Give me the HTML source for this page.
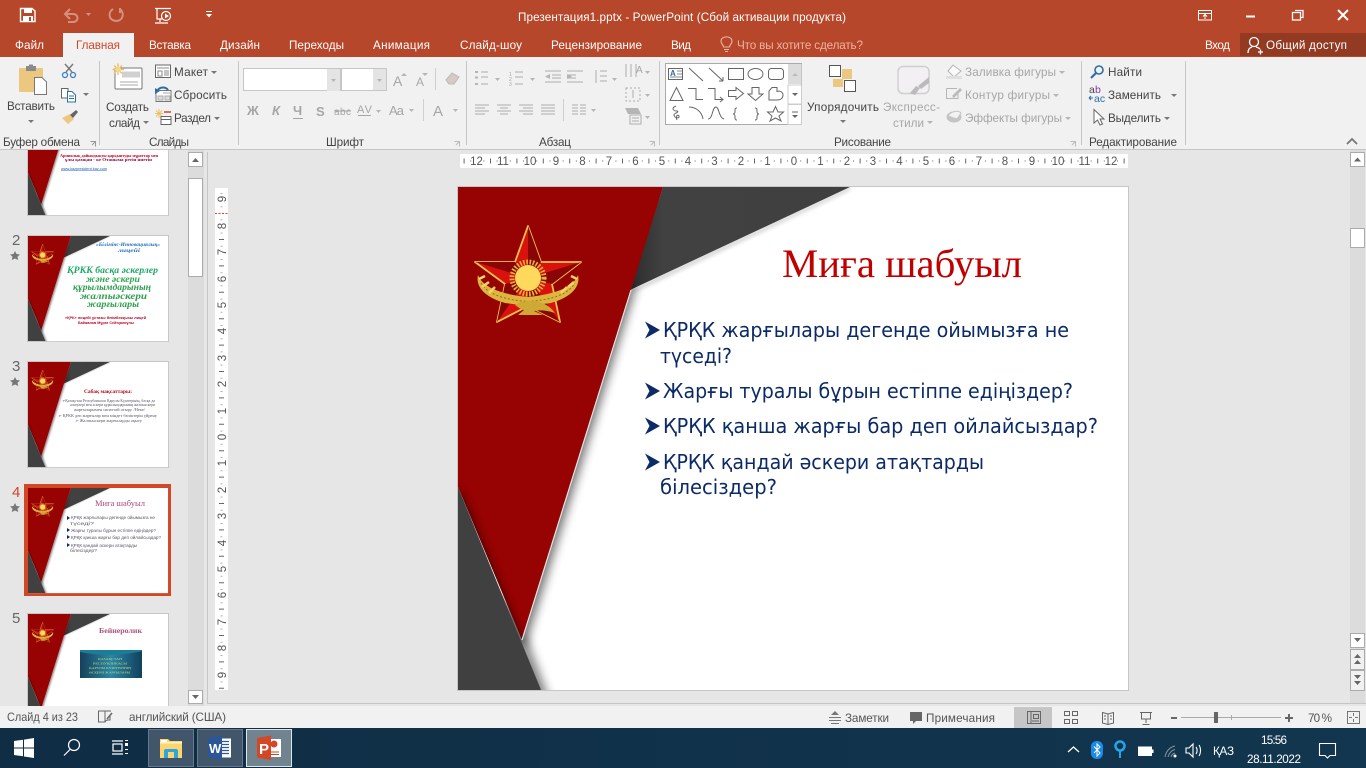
<!DOCTYPE html>
<html lang="ru"><head><meta charset="utf-8"><title>PowerPoint</title>
<style>
html,body{margin:0;padding:0;width:1366px;height:768px;overflow:hidden;background:#e6e6e6}
svg{display:block}
text{font-family:"Liberation Sans","DejaVu Sans",sans-serif;font-size:11.7px;fill:#444}
.w text,text.w{fill:#fff}
.g text,text.g{fill:#a6a6a6}
.l{fill:none;stroke:#adadad;stroke-width:1;shape-rendering:crispEdges}
.d{fill:none;stroke:#666;stroke-width:1}
.r text{font-size:11.5px;fill:#555;text-anchor:middle}
.c{fill:#777}
.cg{fill:#b5b5b5}
.s{font-family:"DejaVu Sans",sans-serif;font-size:20.5px;fill:#0b2a66}
.tn{font-size:4.2px;fill:#556}
</style></head><body>
<svg xmlns="http://www.w3.org/2000/svg" width="1366" height="768" viewBox="0 0 1366 768" shape-rendering="geometricPrecision">
<defs>
<filter id="b5" x="-40%" y="-40%" width="180%" height="180%"><feGaussianBlur stdDeviation="5"/></filter>
<filter id="b3" x="-30%" y="-30%" width="160%" height="160%"><feGaussianBlur stdDeviation="2"/></filter>
<clipPath id="sc"><rect width="670" height="503"/></clipPath>
<clipPath id="red"><polygon points="0,0 205,0 64,453 0,300"/></clipPath>
<clipPath id="tc"><rect x="0" y="150" width="187" height="556"/></clipPath>
<linearGradient id="gt" x1="0" x2="1" y1="0" y2="0"><stop offset="0" stop-color="#2c2c2c"/><stop offset=".15" stop-color="#414141"/><stop offset="1" stop-color="#404040"/></linearGradient>
<linearGradient id="tb" x1="0" x2="1" y1="0" y2="0"><stop offset="0" stop-color="#0f2d45"/><stop offset="1" stop-color="#12364f"/></linearGradient>
<linearGradient id="pic" x1="0" x2="1" y1="0" y2="0"><stop offset="0" stop-color="#15405a"/><stop offset=".5" stop-color="#2a86a8"/><stop offset="1" stop-color="#12405c"/></linearGradient>
<g id="emblem">
 <polygon points="70,39 83,75 123,75 94,97 102,135 70,119 39,135 47,97 17,75 57,75" fill="#d9120e" stroke="#eec350" stroke-width="1.800" stroke-linejoin="round"/>
 <polygon points="70,39 83,75 70,91" fill="#8a0606"/><polygon points="123,75 94,97 70,91" fill="#8a0606"/><polygon points="102,135 70,119 70,91" fill="#8a0606"/><polygon points="39,135 47,97 70,91" fill="#8a0606"/><polygon points="17,75 57,75 70,91" fill="#8a0606"/>
 <circle cx="70" cy="91" r="16" fill="none" stroke="#e4b43c" stroke-width="5" stroke-dasharray="1.600 1.600"/>
 <circle cx="70" cy="91" r="13" fill="#ffd95c"/>
 <path d="M20 88C17 101 29 111 47 116L70 119L93 116C111 111 123 101 120 88C116 99 100 107 70 110C40 107 24 99 20 88Z" fill="#dcb63f"/>
 <path d="M23 96C30 108 48 113 70 114.500C92 113 110 108 117 96" fill="none" stroke="#8f6f1c" stroke-width="1" stroke-dasharray="2 2"/>
 <path d="M21 92L27 89M24 100L31 95M31 106L37 100M110 100L116 95M103 106L109 100M113 89L119 92" stroke="#f3d465" stroke-width="2.500"/>
 <path d="M57 118C62 113 78 113 84 116C90 118 94 122 97 126C88 123 82 123 76 124L85 128H60L66 123C62 122 60 120 57 118Z" fill="#cfa935"/>
</g>
<g id="bg">
 <rect width="670" height="503" fill="#fff"/>
 <g clip-path="url(#sc)">
  <polygon points="392,0 172,103 174,106 392,3" fill="#000" opacity=".22" filter="url(#b3)"/>
  <polygon points="205,0 392,0 172,103" fill="url(#gt)"/>
  <polygon points="100,100 178,100 67,460 40,460" fill="#000" opacity=".55" filter="url(#b5)"/>
  <polygon points="60,450 68,450 91,512 70,512" fill="#000" opacity=".5" filter="url(#b5)"/>
  <polygon points="0,0 205,0 64,453 0,300" fill="#970202"/>
  <g clip-path="url(#red)"><polygon points="0,300 83,503 0,503" fill="#000" opacity=".75" filter="url(#b5)"/></g>
  <path d="M173 103L64 453" stroke="#e5e5e5" stroke-width="1.200" fill="none"/>
  <polygon points="0,300 83,503 0,503" fill="#404040"/>
 </g>
 <use href="#emblem"/>
</g>
</defs>

<!-- chrome base -->
<rect width="1366" height="768" fill="#e6e6e6"/>
<rect width="1366" height="57" fill="#b7472a"/>
<rect y="57" width="1366" height="92" fill="#f1f1f1"/>
<rect y="149" width="1366" height="1" fill="#c6c6c6"/>
<rect x="63" y="33" width="71" height="25" fill="#f1f1f1"/>
<rect x="1240" y="33" width="126" height="23" fill="#923a22"/>

<!-- QAT -->
<g fill="none" stroke="#fff">
 <path d="M20.500 8.500H32L35 11V21.500H20.500Z" stroke-width="1.400"/><rect x="24" y="8" width="8" height="5" fill="#fff" stroke="none"/><rect x="23" y="16" width="10" height="6" fill="#fff" stroke="none"/><rect x="29" y="17" width="2" height="4" fill="#b7472a" stroke="none"/>
</g>
<g fill="none" stroke="#d3917e" stroke-width="2">
 <path d="M66 14H73C79 14 79 22 73 22H68"/><path d="M70 9L65 14L70 19"/>
 <path d="M113 9C108 12 108 20 116 21C123 21 125 13 120 9"/><path d="M120 8V13"/>
</g>
<polygon points="86,13 91,13 88.500,16" fill="#d3917e"/>
<g fill="none" stroke="#fff" stroke-width="1.200">
 <path d="M155 8.500H171M157 9V19H162M160 19V22M155 23H168"/>
 <circle cx="166" cy="16" r="4.500"/>
</g>
<polygon points="165,13.500 169,16 165,18.500" fill="#fff"/>
<path d="M206 11.500h6" stroke="#fff"/><polygon points="206,14 212,14 209,17.500" fill="#fff"/>

<text class="w" x="518" y="21" textLength="328">Презентация1.pptx - PowerPoint (Сбой активации продукта)</text>

<!-- window buttons -->
<g fill="none" stroke="#fff">
 <rect x="1198.500" y="10.500" width="13" height="9.500"/><path d="M1198 13.500h14"/><path d="M1205 19v-4M1203 16.500l2-2 2 2"/>
 <path d="M1246 16.500h9" stroke-width="2"/>
 <rect x="1292.500" y="12.500" width="8" height="7.500" stroke-width="1.300"/><path d="M1295 10.500h8v7h-2" stroke-width="1.300"/>
 <path d="M1338 10L1348 20M1348 10L1338 20" stroke-width="2"/>
</g>

<!-- tabs -->
<g class="w">
 <text x="15" y="49" textLength="29">Файл</text>
 <text x="149" y="49" textLength="42">Вставка</text>
 <text x="220" y="49" textLength="40">Дизайн</text>
 <text x="289" y="49" textLength="55">Переходы</text>
 <text x="373" y="49" textLength="57">Анимация</text>
 <text x="460" y="49" textLength="62">Слайд-шоу</text>
 <text x="551" y="49" textLength="91">Рецензирование</text>
 <text x="671" y="49" textLength="20">Вид</text>
 <text x="1205" y="49" textLength="25">Вход</text>
 <text x="1266" y="49" textLength="81">Общий доступ</text>
</g>
<text x="76" y="49" textLength="44" style="fill:#d24726">Главная</text>
<text x="737" y="49" textLength="126" style="fill:#eeb3a1">Что вы хотите сделать?</text>
<g fill="none" stroke="#eeb3a1" stroke-width="1.100"><path d="M723.500 47C723 44 721 44 721 41C721 35.500 732 35.500 732 41C732 44 730 44 729.500 47Z"/><path d="M724 49.500h5M725 51.500h3"/></g>
<g fill="none" stroke="#fff" stroke-width="1.300"><circle cx="1254" cy="42" r="4.500"/><path d="M1248 53C1248 49 1250 47.500 1252 47M1256 47C1258 47.500 1259 48 1260 49"/><path d="M1258 52h5M1260.500 49.500v5"/></g>

<!-- separators -->
<g stroke="#c6c6c6"><path d="M99.500 61V145M238.500 61V145M466.500 61V145M659.500 61V145M1081.500 61V145M1185.500 61V145"/></g>

<!-- clipboard group -->
<rect x="19" y="68" width="24" height="24" rx="1" fill="#ecc77f"/><rect x="26" y="66" width="10" height="5" fill="#8a8a8a"/><rect x="29" y="64.500" width="4" height="3" fill="#8a8a8a"/>
<path d="M34.500 77.500H42L46.500 82V94.500H34.500Z" fill="#fff" stroke="#777"/>
<text x="7" y="110" textLength="48">Вставить</text><polygon points="28,120 34,120 31,123" class="c"/>
<g fill="none" stroke="#777" stroke-width="1.400"><path d="M65 64L72 72M73 64L66 72"/></g><g fill="none" stroke="#3f7fbf" stroke-width="1.300"><circle cx="65" cy="75" r="2.500"/><circle cx="73" cy="75" r="2.500"/></g>
<path d="M61.500 88.500H68V98H61.500Z" fill="#fff" stroke="#666"/><path d="M67.500 91.500H72L75.500 95V102H67.500Z" fill="#fff" stroke="#2f6ea5"/><path d="M69 96h5M69 98.500h5" stroke="#2f6ea5"/>
<polygon points="83,93 89,93 86,96" class="c"/>
<path d="M62 118L70 114L74 119L68 124Z" fill="#ecc77f"/><path d="M70 115L76 110L78 112L73 118Z" fill="#666"/>
<text x="3" y="146" textLength="77">Буфер обмена</text>
<path d="M90.500 141.500h5v5M92 145l3-3" stroke="#999" fill="none"/>

<!-- slides group -->
<rect x="115" y="68" width="27" height="21" rx="1" fill="#fff" stroke="#777"/><rect x="122" y="71.500" width="18" height="6" fill="#d0d0d0"/><path d="M120 82h18M120 85h18" stroke="#aaa"/>
<g stroke="#ecc066" stroke-width="1.400"><path d="M118 63.500V75M112.500 69.500H124M114 65.500L122 73.500M122 65.500L114 73.500"/></g><circle cx="118" cy="69.500" r="3" fill="#f5d590"/>
<text x="106" y="111" textLength="43">Создать</text><text x="109" y="127" textLength="31">слайд</text><polygon points="143,121 149,121 146,124" class="c"/>
<rect x="155.500" y="65" width="15" height="12.500" fill="#fff" stroke="#666"/><path d="M157 68h12M158 71h4v5h-4zM164 71h5M164 73h5M164 75h5" stroke="#888" fill="none"/>
<path d="M156 90.500h15v11h-15z" fill="#fff" stroke="#777"/><path d="M163 93h7M158 96h5v4h-5zM165 96h5v4h-5z" stroke="#aaa" fill="#ddd"/><path d="M157 91C160 86 166 87 168 90" stroke="#2f6ea5" stroke-width="2" fill="none"/><polygon points="155,88 160,91 155,94" fill="#2f6ea5"/>
<g stroke="#ecc066"><path d="M159 109V118M155 113.500H163M156 110.500L162 116.500M162 110.500L156 116.500"/></g><path d="M164 112h7" stroke="#d24726" stroke-width="1.500"/><path d="M161 116.500h10v8h-10z" fill="#fff" stroke="#666"/><path d="M161 119.500h10" stroke="#666"/>
<text x="174" y="76" textLength="34">Макет</text><polygon points="211,71 217,71 214,74" class="c"/>
<text x="174" y="99" textLength="53">Сбросить</text>
<text x="174" y="122" textLength="37">Раздел</text><polygon points="214,117 220,117 217,120" class="c"/>
<text x="149" y="146" textLength="40">Слайды</text>

<!-- font group -->
<rect x="243.500" y="68.500" width="143" height="22" fill="#fff" stroke="#c6c6c6"/>
<rect x="327" y="69" width="13" height="22" fill="#e4e4e4"/><rect x="340" y="68" width="2" height="23" fill="#c6c6c6"/><rect x="373" y="69" width="13" height="21" fill="#e4e4e4"/>
<polygon points="331,79 336,79 333.500,82" class="cg"/><polygon points="377,79 382,79 379.500,82" class="cg"/>
<g class="g" style="font-weight:bold">
 <text x="393" y="86" style="font-size:14px;font-weight:normal">A</text><text x="416" y="86" style="font-size:12px;font-weight:normal">A</text>
 <text x="247" y="115" style="font-size:13px">Ж</text><text x="272" y="115" style="font-size:13px;font-style:italic">К</text><text x="293" y="115" style="font-size:13px">Ч</text><text x="316" y="116" style="font-size:13px">S</text>
 <text x="334" y="115" textLength="17" style="font-size:10px;font-weight:normal">abc</text><text x="357" y="113" textLength="15" style="font-size:11px;font-weight:normal">AV</text>
 <text x="389" y="115" textLength="15" style="font-size:13px;font-weight:normal">Aa</text><text x="433" y="116" style="font-size:15px;font-weight:normal">A</text>
</g>
<path d="M293 118.500h10M334 111h17M358 115.500h13" stroke="#a6a6a6" fill="none"/>
<polygon points="401,76 407,76 404,73" class="cg"/><polygon points="422,73 428,73 425,76" class="cg"/>
<polygon points="376,110 381,110 378.500,113" class="cg"/><polygon points="409,109 414,109 411.500,112" class="cg"/><polygon points="453,109 458,109 455.500,112" class="cg"/>
<path d="M435.500 68V90M423.500 99V121" stroke="#d0d0d0"/>
<path d="M446 80L452 73L459 77L454 84H449Z" fill="#d8c8c8" stroke="#bbb"/>
<text x="326" y="146" textLength="38">Шрифт</text>
<path d="M454.500 141.500h5v5M456 145l3-3" stroke="#bbb" fill="none"/>

<!-- paragraph group -->
<g class="l">
 <path d="M481 72h7M481 77h7M481 84h7M515 72h8M515 77h8M515 84h8"/>
 <path d="M545 71h16M552 75h9M552 78h9M545 82h16M567 71h16M567 75h9M567 78h9M567 82h16"/>
 <path d="M600 71h7M600 76h7M600 81h7M596 70v13"/>
 <path d="M626 64v13M631 64v13M636 64v13"/>
 <rect x="626" y="88" width="14" height="13" stroke-dasharray="2 2"/><path d="M633 90v8"/>
 <rect x="630" y="115" width="11" height="9"/><path d="M632 118h7M632 121h7"/>
 <path d="M475 105h14M475 108h10M475 111h14M475 114h10"/>
 <path d="M497 105h14M500 108h8M497 111h14M500 114h8"/>
 <path d="M519 105h14M523 108h10M519 111h14M523 114h10"/>
 <path d="M541 105h14M541 108h14M541 111h14M541 114h14"/>
 <path d="M572 105h6M572 108h6M572 111h6M572 114h6M580 105h6M580 108h6M580 111h6M580 114h6"/>
</g>
<rect x="475" y="71" width="3" height="2" class="cg"/><rect x="475" y="76.500" width="3" height="2" class="cg"/><rect x="475" y="83" width="3" height="2" class="cg"/>
<polygon points="550,74 545,76.500 550,79" class="cg"/><polygon points="567,74 572,76.500 567,79" class="cg"/>
<polygon points="625,108 638,108 641,114 628,114" class="cg"/>
<text class="g" x="636" y="73" style="font-size:10px">A</text>
<text class="g" x="509" y="76" style="font-size:5px">1</text><text class="g" x="509" y="81" style="font-size:5px">2</text><text class="g" x="509" y="86" style="font-size:5px">3</text>
<path d="M563.500 99V121" stroke="#d0d0d0"/>
<g class="cg"><polygon points="495,78 500,78 497.500,81"/><polygon points="530,78 535,78 532.500,81"/><polygon points="612,78 617,78 614.500,81"/><polygon points="645,71 650,71 647.500,74"/><polygon points="645,94 650,94 647.500,97"/><polygon points="645,116 650,116 647.500,119"/><polygon points="591,109 596,109 593.500,112"/></g>
<text x="539" y="146" textLength="32">Абзац</text>
<path d="M649.500 141.500h5v5M651 145l3-3" stroke="#bbb" fill="none"/>

<!-- shapes gallery -->
<rect x="665.500" y="63.500" width="136" height="61" fill="#fff" stroke="#ababab"/>
<rect x="788" y="64" width="13.500" height="20" fill="#dcdcdc"/><rect x="788" y="85" width="13.500" height="19" fill="#fff" stroke="#ccc"/><rect x="788" y="104.500" width="13.500" height="20" fill="#fff" stroke="#ccc"/>
<polygon points="792,76 798,76 795,73" fill="#bbb"/><polygon points="792,93 798,93 795,96" fill="#666"/><path d="M792 112h6" stroke="#666"/><polygon points="792,115 798,115 795,118" fill="#666"/>
<g fill="#fff" stroke="#666">
 <rect x="668.500" y="68.500" width="14" height="11"/>
 <path d="M689 68L703 81M709 68L723 81M723 81v-4M723 81h-4" fill="none"/>
 <rect x="728.500" y="68.500" width="15" height="11"/><ellipse cx="755.500" cy="74" rx="7.500" ry="5.500"/><rect x="768.500" y="68.500" width="15" height="11" rx="3"/>
 <polygon points="676.500,87.500 683,100.500 670,100.500"/>
 <path d="M688 88.500H696V99.500H703M708 88.500H715V99.500H723M720 97l3 2.500-3 2.500" fill="none"/>
 <polygon points="728.500,90.500 736,90.500 736,87.500 743.500,93.500 736,99.500 736,96.500 728.500,96.500"/>
 <polygon points="752,87.500 759,87.500 759,94 763,94 755.500,100.500 748,94 752,94"/>
 <path d="M772 87.500H777V91.500C780 90.500 783 92 783 95C783 98 781 100 777 100H769V91Z"/>
 <path d="M676 106C671 108 673 111 677 111C680 112 674 113 674 115C674 118 680 119 679 116C678 114 675 116 677 120" fill="none"/>
 <path d="M689 107C696 107 702 112 703 119M708 119C713 119 712 107 716 107C719 107 719 118 724 119" fill="none"/>
 <path d="M737 108C735 108 735 109 735 111V112C735 113 734 114 733 114C734 114 735 115 735 116V118C735 119 735 120 737 120M755 108C757 108 757 109 757 111V112C757 113 758 114 759 114C758 114 757 115 757 116V118C757 119 757 120 755 120" fill="none"/>
 <polygon points="775.500,106.500 778,112 783.500,112 779,116 781,121 775.500,118 770,121 772,116 767.500,112 773,112"/>
</g>
<text x="670" y="76" style="font-size:8px;font-weight:bold;fill:#2f6ea5">A</text><path d="M677 71h5M677 74h5M670 77h12" stroke="#888"/>

<!-- drawing group -->
<rect x="829.500" y="65.500" width="11" height="11" fill="#fff" stroke="#555"/>
<rect x="842" y="69" width="10" height="10" fill="#ecc77f"/><rect x="833" y="79" width="10" height="8" fill="#ecc77f"/>
<rect x="844.500" y="80.500" width="11" height="11" fill="#fff" stroke="#555"/>
<text x="807" y="111" textLength="72">Упорядочить</text><polygon points="840,120 846,120 843,123" class="c"/>
<rect x="898" y="66.500" width="31" height="27" rx="5" fill="#f3f0f3" stroke="#cfcfcf" stroke-width="1.500"/>
<path d="M910 93L916 86L920 88L915 95Z" fill="#bbb"/><path d="M918 86L929 77V83L921 89Z" fill="#bbb"/>
<g class="g"><text x="883" y="111" textLength="57">Экспресс-</text><text x="893" y="127" textLength="31">стили</text>
<text x="965" y="76" textLength="91">Заливка фигуры</text><text x="965" y="99" textLength="85">Контур фигуры</text><text x="965" y="122" textLength="97">Эффекты фигуры</text></g>
<g class="cg"><polygon points="927,121 933,121 930,124"/><polygon points="1059,71 1065,71 1062,74"/><polygon points="1053,94 1059,94 1056,97"/><polygon points="1065,117 1071,117 1068,120"/></g>
<path d="M948 71L953 65L961 71L954 77Z" fill="#fafafa" stroke="#b5b5b5"/><rect x="946" y="76" width="16" height="3" fill="#e0e0e0"/>
<path d="M946.500 88.500H957M946.500 88.500V98.500H958V94" fill="none" stroke="#b5b5b5"/><path d="M952 96L960 88L962 90L954 98Z" fill="#bbb"/>
<ellipse cx="954" cy="117" rx="7.500" ry="5.500" fill="#c4c4c4"/><path d="M948 116C951 111 958 110 961 113L957 119Z" fill="#f2f2f2" stroke="#c4c4c4"/>
<text x="834" y="146" textLength="57">Рисование</text>
<path d="M1070.500 141.500h5v5M1072 145l3-3" stroke="#bbb" fill="none"/>

<!-- editing group -->
<circle cx="1099" cy="70" r="4" fill="none" stroke="#2f6ea5" stroke-width="1.600"/><path d="M1096 73L1091 78" stroke="#2f6ea5" stroke-width="2.200"/>
<text x="1108" y="76" textLength="34">Найти</text>
<text x="1089" y="93" style="font-size:10.500px;fill:#444">a</text><text x="1095" y="93" style="font-size:10.500px;fill:#7a3fa0">b</text><text x="1094" y="102" style="font-size:10.500px;fill:#2f6ea5">ac</text><path d="M1089 98h4M1089 98l2-2M1089 98l2 2" stroke="#2f6ea5" fill="none"/>
<text x="1108" y="99" textLength="53">Заменить</text><polygon points="1171,94 1177,94 1174,97" class="c"/>
<path d="M1094 109.500V123L1097.500 120L1100 125L1102.500 124L1100 119H1104Z" fill="#fff" stroke="#666"/>
<text x="1108" y="122" textLength="53">Выделить</text><polygon points="1164,117 1170,117 1167,120" class="c"/>
<text x="1089" y="146" textLength="88">Редактирование</text>
<path d="M1347 144L1352 139L1357 144" fill="none" stroke="#777" stroke-width="1.800"/>

<!-- main bg lines -->
<rect x="188" y="150" width="16" height="556" fill="#dcdcdc"/>
<rect x="207" y="152" width="1" height="551" fill="#c6c6c6"/>
<rect x="207" y="703" width="1159" height="1" fill="#c6c6c6"/>
<!-- thumbnail scrollbar -->
<rect x="188.500" y="152.500" width="14" height="14" fill="#fff" stroke="#ababab"/><polygon points="192,162 199,162 195.500,158" fill="#666"/>
<rect x="188.500" y="178.500" width="14" height="98" fill="#fff" stroke="#ababab"/>
<rect x="188.500" y="690.500" width="14" height="13" fill="#fff" stroke="#ababab"/><polygon points="192,695 199,695 195.500,699" fill="#666"/>
<!-- right scrollbar -->
<rect x="1350" y="150" width="15" height="553" fill="#dcdcdc"/>
<rect x="1350.500" y="152.500" width="14" height="14" fill="#fff" stroke="#ababab"/><polygon points="1354,161.500 1361,161.500 1357.500,157.500" fill="#666"/>
<rect x="1350.500" y="228.500" width="14" height="19" fill="#fff" stroke="#ababab"/>
<rect x="1350.500" y="633.500" width="14" height="14" fill="#fff" stroke="#ababab"/><polygon points="1354,638 1361,638 1357.500,642" fill="#666"/>
<rect x="1350.500" y="649.500" width="14" height="20" fill="#f1f1f1" stroke="#ababab"/><polygon points="1354,658 1361,658 1357.500,654" fill="#666"/><polygon points="1354,664 1361,664 1357.500,660" fill="#666"/>
<rect x="1350.500" y="670.500" width="14" height="20" fill="#f1f1f1" stroke="#ababab"/><polygon points="1354,675 1361,675 1357.500,679" fill="#666"/><polygon points="1354,681 1361,681 1357.500,685" fill="#666"/>

<!-- thumbnails -->
<g clip-path="url(#tc)">
 <rect x="27" y="109" width="142" height="107" fill="#c6c6c6"/><rect x="28" y="110" width="140" height="105" fill="#fff"/>
 <g transform="translate(28,110) scale(.209)"><use href="#bg"/></g>
 <text x="60" y="157" textLength="98" lengthAdjust="spacingAndGlyphs" style="font-size:4px;font-weight:bold;fill:#c00020;font-family:'Liberation Serif',serif">Армиялық дайындықты қарқынтуды мұраттар мен</text>
 <text x="65" y="161" textLength="87" lengthAdjust="spacingAndGlyphs" style="font-size:4px;font-weight:bold;fill:#a00030;font-family:'Liberation Serif',serif">ұлы қамқан - ке Отаныма ретін ниетін</text>
 <text x="61" y="170" textLength="46" lengthAdjust="spacingAndGlyphs" style="font-size:4px;fill:#2060c0">www.kazpresident.kaz.com</text>
 <path d="M61 170.500h46" stroke="#2f6ea5" stroke-width=".6"/>

 <rect x="27" y="235" width="142" height="107" fill="#c6c6c6"/><rect x="28" y="236" width="140" height="105" fill="#fff"/>
 <g transform="translate(28,236) scale(.209)"><use href="#bg"/></g>
 <text x="96" y="246" textLength="64" lengthAdjust="spacingAndGlyphs" style="font-size:5px;font-style:italic;font-weight:bold;fill:#1f6fc0;font-family:'Liberation Serif',serif">«Білімінс-Инновациялық»</text>
 <text x="118" y="252" textLength="22" lengthAdjust="spacingAndGlyphs" style="font-size:5px;font-style:italic;font-weight:bold;fill:#1f6fc0;font-family:'Liberation Serif',serif">лицейі</text>
 <g style="font-style:italic;font-weight:bold">
 <text x="67" y="273" textLength="91" lengthAdjust="spacingAndGlyphs" style="font-size:9px;fill:#20a868;font-family:'Liberation Serif',serif">ҚРКК басқа әскерлер</text>
 <text x="86" y="282" textLength="54" lengthAdjust="spacingAndGlyphs" style="font-size:9px;fill:#30a850;font-family:'Liberation Serif',serif">және әскери</text>
 <text x="73" y="290" textLength="78" lengthAdjust="spacingAndGlyphs" style="font-size:9px;fill:#30a050;font-family:'Liberation Serif',serif">құрылымдарының</text>
 <text x="80" y="299" textLength="67" lengthAdjust="spacingAndGlyphs" style="font-size:9px;fill:#30a050;font-family:'Liberation Serif',serif">жалпыәскери</text>
 <text x="87" y="307" textLength="52" lengthAdjust="spacingAndGlyphs" style="font-size:9px;fill:#30a050;font-family:'Liberation Serif',serif">жарғылары</text>
 </g>
 <text x="65" y="319" textLength="81" lengthAdjust="spacingAndGlyphs" style="font-size:3.500px;font-weight:bold;fill:#c00020">«ҚРК» лицейі ұстазы Әлімбекқызы лицей</text>
 <text x="78" y="324" textLength="56" lengthAdjust="spacingAndGlyphs" style="font-size:3.500px;font-weight:bold;fill:#c00020">Байжанов Мұрат Сейтқалиұлы</text>

 <rect x="27" y="361" width="142" height="107" fill="#c6c6c6"/><rect x="28" y="362" width="140" height="105" fill="#fff"/>
 <g transform="translate(28,362) scale(.209)"><use href="#bg"/></g>
 <text x="84" y="393" textLength="48" lengthAdjust="spacingAndGlyphs" style="font-size:5px;font-weight:bold;fill:#b80010;font-family:'Liberation Serif',serif">Сабақ мақсаттары:</text>
 <text class="tn" x="62" y="402" textLength="93" lengthAdjust="spacingAndGlyphs" style="font-size:3.800px;font-family:'Liberation Serif',serif">➢Қазақстан Республикасы Қарулы Күштерінің, басқа да</text>
 <text class="tn" x="70" y="406" textLength="85" lengthAdjust="spacingAndGlyphs" style="font-size:3.800px;font-family:'Liberation Serif',serif">әскерлері мен әскери құрылымдарының жалпыәскери</text>
 <text class="tn" x="74" y="411" textLength="71" lengthAdjust="spacingAndGlyphs" style="font-size:3.800px;font-family:'Liberation Serif',serif">жарғыларымен сипаттай отыру. /Неке/</text>
 <text class="tn" x="58" y="417" textLength="99" lengthAdjust="spacingAndGlyphs" style="font-size:3.800px;font-family:'Liberation Serif',serif">➢ ҚРКК деп жарғылар мен міндет бөліктерін үйрену</text>
 <text class="tn" x="75" y="422" textLength="67" lengthAdjust="spacingAndGlyphs" style="font-size:3.800px;font-family:'Liberation Serif',serif">➢ Жалпыәскери жарғыларды оқыту</text>

 <rect x="24" y="484" width="147" height="112" fill="#d24726"/><rect x="28" y="488" width="140" height="104" fill="#fff"/>
 <g transform="translate(28,488) scale(.209)"><use href="#bg"/></g>
 <text x="95" y="506" textLength="50" lengthAdjust="spacingAndGlyphs" style="font-size:8px;fill:#b0467c;font-family:'Liberation Serif',serif">Миға шабуыл</text>
 <polygon points="67,516 70,518 67,520" fill="#0b2a66"/><polygon points="67,528 70,530 67,532" fill="#0b2a66"/><polygon points="67,535 70,537 67,539" fill="#0b2a66"/><polygon points="67,543 70,545 67,547" fill="#0b2a66"/>
 <text class="tn" x="71" y="519" textLength="84" lengthAdjust="spacingAndGlyphs">ҚРҚК жарғылары дегенде ойымызға не</text>
 <text class="tn" x="70" y="525" textLength="24" lengthAdjust="spacingAndGlyphs">түседі?</text>
 <text class="tn" x="71" y="532" textLength="85" lengthAdjust="spacingAndGlyphs">Жарғы туралы бұрын естіппе едіңіздер?</text>
 <text class="tn" x="71" y="539" textLength="90" lengthAdjust="spacingAndGlyphs">ҚРҚК қанша жарғы бар деп ойлайсыздар?</text>
 <text class="tn" x="71" y="547" textLength="66" lengthAdjust="spacingAndGlyphs">ҚРҚК қандай әскери атақтарды</text>
 <text class="tn" x="70" y="552" textLength="27" lengthAdjust="spacingAndGlyphs">білесіздер?</text>

 <rect x="27" y="613" width="142" height="107" fill="#c6c6c6"/><rect x="28" y="614" width="140" height="105" fill="#fff"/>
 <g transform="translate(28,614) scale(.209)"><use href="#bg"/></g>
 <text x="99" y="633" textLength="43" lengthAdjust="spacingAndGlyphs" style="font-size:7.500px;font-weight:bold;fill:#b0507c;font-family:'Liberation Serif',serif">Бейнеролик</text>
 <rect x="80" y="650" width="62" height="28" fill="url(#pic)"/>
 <path d="M80 652C100 656 120 656 142 651V650H80Z" fill="#1e7d96"/>
 <text x="98" y="660" textLength="24" lengthAdjust="spacingAndGlyphs" style="font-size:3.500px;fill:#c8dc70;font-family:'Liberation Serif',serif">ҚАЗАҚСТАН</text>
 <text x="93" y="664.500" textLength="34" lengthAdjust="spacingAndGlyphs" style="font-size:3.500px;fill:#c8dc70;font-family:'Liberation Serif',serif">РЕСПУБЛИКАСЫ</text>
 <text x="89" y="669" textLength="42" lengthAdjust="spacingAndGlyphs" style="font-size:3.500px;fill:#c8dc70;font-family:'Liberation Serif',serif">ҚАРУЛЫ КҮШТЕРІНІҢ</text>
 <text x="89" y="673.500" textLength="41" lengthAdjust="spacingAndGlyphs" style="font-size:3.500px;fill:#c8dc70;font-family:'Liberation Serif',serif">ӘСКЕРИ ЖАРҒЫЛАРЫ</text>
</g>
<text x="12" y="245" style="font-size:15px;fill:#666">2</text><text x="12" y="371" style="font-size:15px;fill:#666">3</text>
<text x="12" y="497" style="font-size:15px;fill:#d24726">4</text><text x="12" y="623" style="font-size:15px;fill:#666">5</text>
<g fill="#777">
 <polygon id="st" points="15,251 16.500,254 20,254.500 17.500,256.800 18.200,260 15,258.500 11.800,260 12.500,256.800 10,254.500 13.500,254"/>
 <use href="#st" y="126"/><use href="#st" y="252"/>
</g>

<!-- rulers -->
<rect x="460" y="154" width="668" height="14" fill="#fff"/>
<path d="M463.600 161H1128" stroke="#666" stroke-width="5" stroke-dasharray="1 25.400"/>
<path d="M470.200 161H1128" stroke="#b0b0b0" stroke-width="2" stroke-dasharray="1 12.200"/>
<g class="r">
 <text x="476.500" y="165">12</text><text x="503" y="165">11</text><text x="530" y="165">10</text><text x="556" y="165">9</text><text x="582.500" y="165">8</text><text x="609" y="165">7</text><text x="635.500" y="165">6</text><text x="662" y="165">5</text><text x="688" y="165">4</text><text x="714.500" y="165">3</text><text x="741" y="165">2</text><text x="767.500" y="165">1</text><text x="794" y="165">0</text>
 <text x="820.500" y="165">1</text><text x="847" y="165">2</text><text x="873" y="165">3</text><text x="899.500" y="165">4</text><text x="926" y="165">5</text><text x="952" y="165">6</text><text x="979" y="165">7</text><text x="1005" y="165">8</text><text x="1032" y="165">9</text><text x="1058" y="165">10</text><text x="1084.500" y="165">11</text><text x="1111" y="165">12</text>
</g>
<rect x="215" y="188" width="13" height="502" fill="#fff"/>
<path d="M221.500 239V690" stroke="#666" stroke-width="5" stroke-dasharray="1 25.400"/>
<path d="M221.500 193V690" stroke="#b0b0b0" stroke-width="2" stroke-dasharray="1 12.200"/>
<path d="M215 213.500h13" stroke="#d24726" stroke-dasharray="2 1.500"/>
<g class="r">
 <text transform="translate(226,199) rotate(-90)">9</text><text transform="translate(226,226) rotate(-90)">8</text><text transform="translate(226,252) rotate(-90)">7</text><text transform="translate(226,279) rotate(-90)">6</text><text transform="translate(226,305) rotate(-90)">5</text><text transform="translate(226,331) rotate(-90)">4</text><text transform="translate(226,358) rotate(-90)">3</text><text transform="translate(226,384) rotate(-90)">2</text><text transform="translate(226,411) rotate(-90)">1</text><text transform="translate(226,437) rotate(-90)">0</text>
 <text transform="translate(226,463) rotate(-90)">1</text><text transform="translate(226,490) rotate(-90)">2</text><text transform="translate(226,516) rotate(-90)">3</text><text transform="translate(226,543) rotate(-90)">4</text><text transform="translate(226,569) rotate(-90)">5</text><text transform="translate(226,595) rotate(-90)">6</text><text transform="translate(226,622) rotate(-90)">7</text><text transform="translate(226,648) rotate(-90)">8</text><text transform="translate(226,675) rotate(-90)">9</text>
</g>

<!-- main slide -->
<rect x="457" y="186" width="672" height="505" fill="#c6c6c6"/>
<g transform="translate(458,187)"><use href="#bg"/></g>
<text x="782" y="277" textLength="240" lengthAdjust="spacingAndGlyphs" style="font-family:'Liberation Serif',serif;font-size:40px;fill:#c00000">Миға шабуыл</text>
<g fill="#0b2a66">
 <g id="bl"><path d="M645 321.500L660 330L645 338.500L649.500 330Z"/></g>
 <use href="#bl" y="61"/><use href="#bl" y="96"/><use href="#bl" y="132"/>
</g>
<text class="s" x="663" y="337" textLength="406" lengthAdjust="spacingAndGlyphs">ҚРҚК жарғылары дегенде ойымызға не</text>
<text class="s" x="660" y="363" textLength="72" lengthAdjust="spacingAndGlyphs">түседі?</text>
<text class="s" x="663" y="398" textLength="410" lengthAdjust="spacingAndGlyphs">Жарғы туралы бұрын естіппе едіңіздер?</text>
<text class="s" x="663" y="433" textLength="435" lengthAdjust="spacingAndGlyphs">ҚРҚК қанша жарғы бар деп ойлайсыздар?</text>
<text class="s" x="663" y="469" textLength="321" lengthAdjust="spacingAndGlyphs">ҚРҚК қандай әскери атақтарды</text>
<text class="s" x="660" y="494" textLength="117" lengthAdjust="spacingAndGlyphs">білесіздер?</text>

<!-- status bar -->
<rect y="706" width="1366" height="22" fill="#f1f1f1"/>
<text x="7" y="721" textLength="71" lengthAdjust="spacingAndGlyphs" style="fill:#555">Слайд 4 из 23</text>
<path d="M98.500 711H105V722H98.500ZM105 711H111M105 722C106 720 108 720 108 720H110V715" fill="none" stroke="#666"/><path d="M107 719L112 713" stroke="#666" stroke-width="1.500"/>
<text x="129" y="721" textLength="97" style="fill:#555">английский (США)</text>
<g stroke="#777"><path d="M829 717.500h12M829 720.500h12M831 723.500h8" fill="none"/></g><polygon points="831,715 839,715 835,711" fill="#777"/>
<text x="845" y="722" textLength="44" style="fill:#555">Заметки</text>
<path d="M910 712H922V721H916L913 724V721H910Z" fill="#666"/>
<text x="926" y="722" textLength="69" style="fill:#555">Примечания</text>
<rect x="1014" y="707" width="38" height="21" fill="#c6c6c6"/>
<g fill="none" stroke="#666">
 <rect x="1027.500" y="711.500" width="13" height="12"/><path d="M1031 712V723M1033.500 714.500h5v4h-5zM1032 721h7"/>
 <rect x="1064.500" y="711.500" width="5" height="4"/><rect x="1072.500" y="711.500" width="5" height="4"/><rect x="1064.500" y="719.500" width="5" height="4"/><rect x="1072.500" y="719.500" width="5" height="4"/>
 <path d="M1102.500 712.500L1108 714L1113.500 712.500V723L1108 724.500L1102.500 723ZM1108 714V724M1104 716h2M1104 719h2M1110 716h2M1110 719h2"/>
 <path d="M1140 712.500h12M1141.500 713v6h9v-6M1146 719v4M1142.500 724.500h7"/>
 <path d="M1181 717.500H1281" stroke="#aaa"/><path d="M1231.500 715V720" stroke="#aaa"/>
 <rect x="1347.500" y="711.500" width="12" height="12" stroke="#777"/><path d="M1353.500 713v3M1353.500 719v3M1349 717.500h3M1355 717.500h3" stroke="#777"/>
</g>
<rect x="1214" y="712" width="4" height="11" fill="#666"/>
<path d="M1171 718h6M1285 718h8M1289 714v8" stroke="#666" stroke-width="2"/>
<text x="1308" y="722" textLength="24" style="fill:#555">70 %</text>

<!-- taskbar -->
<rect y="728" width="1366" height="40" fill="url(#tb)"/>
<g fill="#fff"><polygon points="14,741 23,739.800 23,747.500 14,747.500"/><polygon points="24,739.600 34,738 34,747.500 24,747.500"/><polygon points="14,748.500 23,748.500 23,756.300 14,755"/><polygon points="24,748.500 34,748.500 34,758 24,756.500"/></g>
<g fill="none" stroke="#fff" stroke-width="1.200"><circle cx="74" cy="745" r="5.500"/><path d="M70 749.500L64 755.500"/><path d="M112 741h11M112 754h11"/><rect x="113" y="744" width="9" height="7"/></g>
<rect x="125" y="743" width="3" height="3" fill="#fff"/><path d="M125 740.500h3M125 749.500h3M125 753.500h3" stroke="#fff"/>
<rect x="148.500" y="729.500" width="45" height="37" fill="#41566b" stroke="#66788a"/>
<rect x="197.500" y="729.500" width="45" height="37" fill="#41566b" stroke="#66788a"/>
<rect x="246.500" y="729.500" width="45" height="37" fill="#70838f" stroke="#dfe6ea"/>
<path d="M160 739H168L170 741H182V758H160Z" fill="#fcd56f"/><rect x="160" y="742" width="22" height="1.500" fill="#fff3c4"/><rect x="161" y="740" width="6" height="2" fill="#fff"/>
<path d="M164 758V751C164 749.500 165 749 166 749H176C177 749 178 749.500 178 751V758H174V752H168V758Z" fill="#2ba6e0"/>
<rect x="219" y="738.500" width="12" height="19" fill="#fff"/><path d="M221 741.500h8M221 744.500h8M221 747.500h8M221 750.500h8M221 753.500h8" stroke="#2b579a" stroke-width="1.200"/>
<polygon points="208,738 222,735.500 222,760 208,757.500" fill="#2b579a"/>
<text x="209" y="753" style="font-size:13px;font-weight:bold;fill:#fff">W</text>
<rect x="268" y="739" width="13" height="18" fill="#fff"/><circle cx="274" cy="744" r="3.500" fill="#d24726"/><path d="M270 752h9M270 754.500h9" stroke="#d24726"/>
<polygon points="257,738 271,735.500 271,760 257,757.500" fill="#d24726"/>
<text x="259" y="754" style="font-size:15px;font-weight:bold;fill:#fff">P</text>

<!-- tray -->
<path d="M1068 752L1073.500 747L1079 752" fill="none" stroke="#fff" stroke-width="1.300"/>
<rect x="1091" y="741" width="12" height="18" rx="5.500" fill="#1a8ae8"/><path d="M1094 746.500L1100 753L1097 756V744L1100 747L1094 753" fill="none" stroke="#fff"/>
<circle cx="1120" cy="746" r="4.500" fill="none" stroke="#27a4e8" stroke-width="2.500"/><path d="M1120 750v8" stroke="#27a4e8" stroke-width="2"/>
<rect x="1139" y="747.500" width="12" height="7.500" fill="#fff"/><rect x="1152" y="749.500" width="1.500" height="3.500" fill="#fff"/><rect x="1138.500" y="747" width="13" height="8.500" fill="none" stroke="#fff"/>
<path d="M1165 757C1166 751 1170 747 1175 746M1168 757C1169 753 1172 750 1175 749.500M1171 757C1171.500 755 1173 753.500 1175 753" fill="none" stroke="#8195a4"/><circle cx="1175" cy="756" r="1.500" fill="#fff"/>
<path d="M1186 748h3L1193 744V757L1189 753H1186ZM1196 747C1197.500 749 1197.500 752 1196 754M1199 745C1201 748 1201 753 1199 756" fill="none" stroke="#fff" stroke-width="1.100"/>
<g class="w"><text x="1213" y="755" textLength="21">ҚАЗ</text><text x="1261" y="744" textLength="26">15:56</text><text x="1247" y="763" textLength="54">28.11.2022</text></g>
<path d="M1319.500 743.500H1335.500V755.500H1330L1327.500 758L1325 755.500H1319.500Z" fill="none" stroke="#fff" stroke-width="1.100"/>
</svg>
</body></html>
